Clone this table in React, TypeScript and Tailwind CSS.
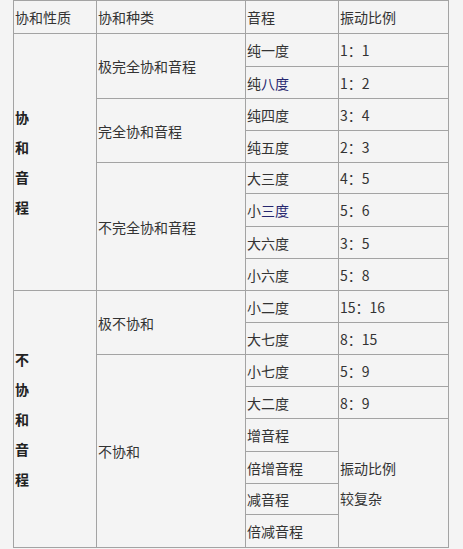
import React from "react";

const font = { fontFamily: '"Noto Sans CJK SC", "Noto Sans", sans-serif' };

function Cell({
  className = "",
  children,
}: {
  className?: string;
  children?: React.ReactNode;
}) {
  return (
    <div
      className={
        "flex items-center border-r border-b border-[#a3a3a3] pl-px text-[14px] leading-[20px] text-[#333] whitespace-nowrap overflow-hidden " +
        className
      }
    >
      {children}
    </div>
  );
}

const Blue = ({ children }: { children: React.ReactNode }) => (
  <span className="text-[#26266e]">{children}</span>
);

export default function App() {
  return (
    <div className="w-[463px] h-[549px] bg-[#f4f4f4] overflow-hidden" style={font}>
      <div className="ml-[13px] grid grid-cols-[83px_149px_93px_110px] grid-rows-[33px_33px_32px_32px_32px_31px_33px_32px_32px_32px_32px_32px_32px_33px_32px_31px_33px] border-t border-l border-[#a3a3a3] w-[436px]">
        <Cell className="col-start-1 row-start-1">协和性质</Cell>
        <Cell className="col-start-2 row-start-1">协和种类</Cell>
        <Cell className="col-start-3 row-start-1">音程</Cell>
        <Cell className="col-start-4 row-start-1">振动比例</Cell>

        <Cell className="col-start-1 row-start-2 row-span-8">
          <div className="flex flex-col font-bold text-[#222] leading-[30px]">
            <span>协</span>
            <span>和</span>
            <span>音</span>
            <span>程</span>
          </div>
        </Cell>
        <Cell className="col-start-2 row-start-2 row-span-2">极完全协和音程</Cell>
        <Cell className="col-start-2 row-start-4 row-span-2">完全协和音程</Cell>
        <Cell className="col-start-2 row-start-6 row-span-4">不完全协和音程</Cell>

        <Cell className="col-start-3 row-start-2">纯一度</Cell>
        <Cell className="col-start-4 row-start-2">1：1</Cell>
        <Cell className="col-start-3 row-start-3">
          纯<Blue>八度</Blue>
        </Cell>
        <Cell className="col-start-4 row-start-3">1：2</Cell>
        <Cell className="col-start-3 row-start-4">纯四度</Cell>
        <Cell className="col-start-4 row-start-4">3：4</Cell>
        <Cell className="col-start-3 row-start-5">纯五度</Cell>
        <Cell className="col-start-4 row-start-5">2：3</Cell>
        <Cell className="col-start-3 row-start-6">大三度</Cell>
        <Cell className="col-start-4 row-start-6">4：5</Cell>
        <Cell className="col-start-3 row-start-7">
          小<Blue>三度</Blue>
        </Cell>
        <Cell className="col-start-4 row-start-7">5：6</Cell>
        <Cell className="col-start-3 row-start-8">大六度</Cell>
        <Cell className="col-start-4 row-start-8">3：5</Cell>
        <Cell className="col-start-3 row-start-9">小六度</Cell>
        <Cell className="col-start-4 row-start-9">5：8</Cell>

        <Cell className="col-start-1 row-start-10 row-span-8">
          <div className="flex flex-col font-bold text-[#222] leading-[30px]">
            <span>不</span>
            <span>协</span>
            <span>和</span>
            <span>音</span>
            <span>程</span>
          </div>
        </Cell>
        <Cell className="col-start-2 row-start-10 row-span-2">极不协和</Cell>
        <Cell className="col-start-2 row-start-12 row-span-6">不协和</Cell>

        <Cell className="col-start-3 row-start-10">小二度</Cell>
        <Cell className="col-start-4 row-start-10">15：16</Cell>
        <Cell className="col-start-3 row-start-11">大七度</Cell>
        <Cell className="col-start-4 row-start-11">8：15</Cell>
        <Cell className="col-start-3 row-start-12">小七度</Cell>
        <Cell className="col-start-4 row-start-12">5：9</Cell>
        <Cell className="col-start-3 row-start-13">大二度</Cell>
        <Cell className="col-start-4 row-start-13">8：9</Cell>
        <Cell className="col-start-3 row-start-14">增音程</Cell>
        <Cell className="col-start-3 row-start-15">倍增音程</Cell>
        <Cell className="col-start-3 row-start-16">减音程</Cell>
        <Cell className="col-start-3 row-start-17">倍减音程</Cell>
        <Cell className="col-start-4 row-start-14 row-span-4">
          <div className="flex flex-col leading-[30px]">
            <span>振动比例</span>
            <span>较复杂</span>
          </div>
        </Cell>
      </div>
    </div>
  );
}
